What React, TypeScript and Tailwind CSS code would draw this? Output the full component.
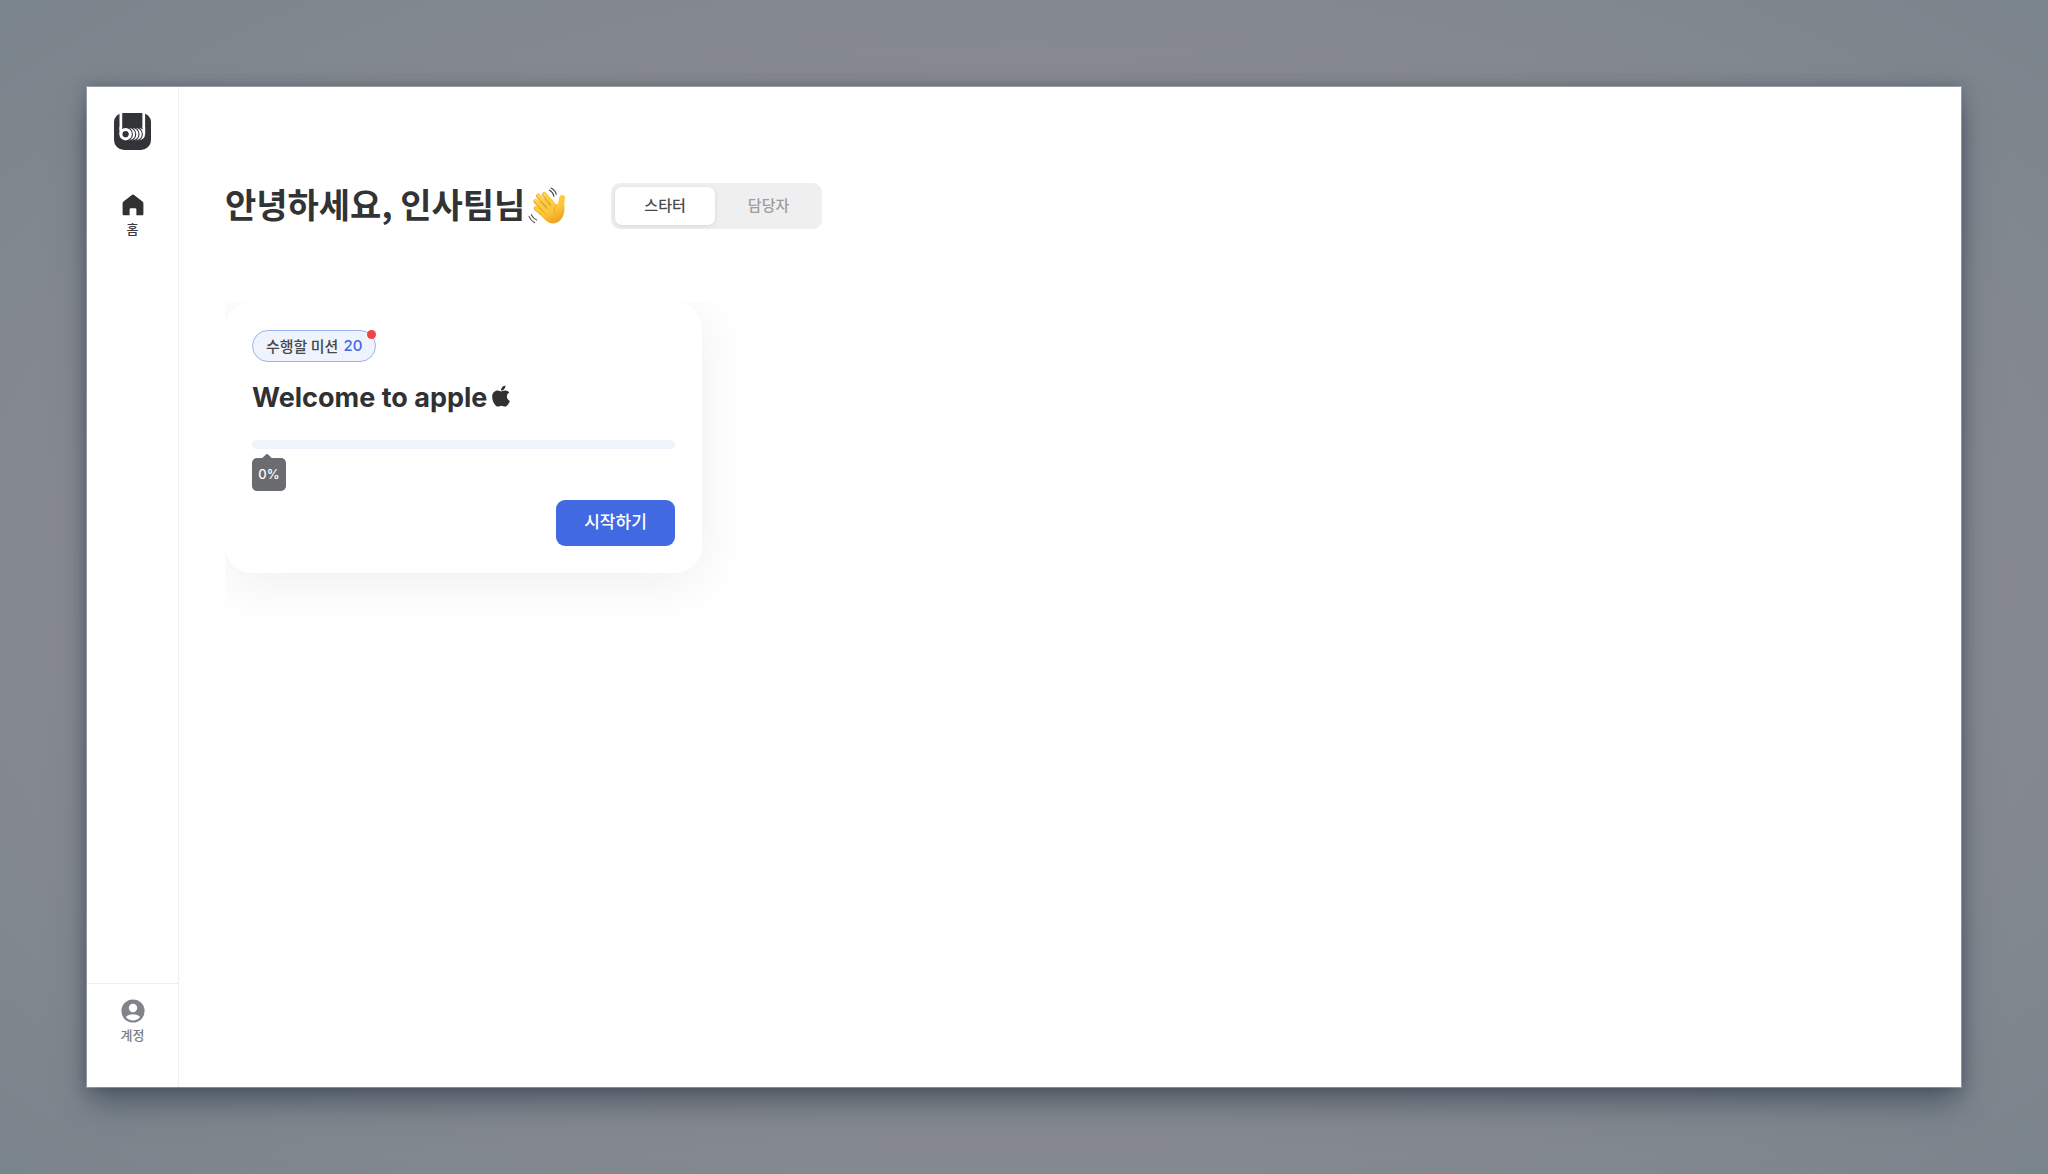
import React, { useState } from 'react';
import { FaApple } from 'react-icons/fa';

// -------------------------------------------------------------
// ICONS
// -------------------------------------------------------------
function LogoIcon() {
  return (
    <svg viewBox="0 0 37 37" className="w-[37px] h-[37px]" aria-hidden="true">
      <path d="M9 0H28A9 9 0 0 1 37 9V27A10 10 0 0 1 27 37H10A10 10 0 0 1 0 27V9A9 9 0 0 1 9 0Z" fill="#323437" />
      <path d="M5.5 0H8.2V21H5.5ZM28.4 0H31.1V21H28.4Z" fill="#fff" />
      {[24.8, 21.5, 18.2, 14.9].map((cx) => (
        <circle key={cx} cx={cx} cy="21.2" r="6.8" fill="#fff" stroke="#323437" strokeWidth="1.1" />
      ))}
      <path d="M28.4 14H31.1V21.4L29.4 20Z" fill="#fff" />
      <circle cx="11.6" cy="21.2" r="6.8" fill="#fff" stroke="#323437" strokeWidth="1.1" />
      <path d="M5.5 14H8.2V18L5.5 21.2Z" fill="#fff" />
      <circle cx="11.6" cy="21.2" r="3.1" fill="#323437" />
    </svg>
  );
}

function HomeIcon() {
  return (
    <svg viewBox="0 0 22 22" className="w-[22px] h-[22px]" fill="#2f3133" aria-hidden="true">
      <path d="M9.9 0.9Q11 0.1 12.1 0.9L20.5 7.6Q21.4 8.3 21.4 9.4V20.1Q21.4 21.3 20.2 21.3H14.4V15.6Q14.4 14.3 13.2 14.3H8.8Q7.6 14.3 7.6 15.6V21.3H1.8Q0.6 21.3 0.6 20.1V9.4Q0.6 8.3 1.5 7.6Z" />
    </svg>
  );
}

function AccountIcon() {
  return (
    <svg viewBox="0 0 24 24" className="w-6 h-6" aria-hidden="true">
      <circle cx="12" cy="12" r="11.6" fill="#808389" />
      <circle cx="12" cy="9" r="4.2" fill="#fff" />
      <path d="M4.9 18C6.5 16.1 9.2 15.3 12 15.3S17.5 16.1 19.1 18C17.5 20.2 14.9 21.4 12 21.4S6.5 20.2 4.9 18Z" fill="#fff" />
    </svg>
  );
}

function WavingHand() {
  return (
    <svg viewBox="22 15 114 114" className="w-[38px] h-[38px]" role="img" aria-label="손 인사">
      <defs>
        <linearGradient id="skin" gradientUnits="userSpaceOnUse" x1="60" y1="30" x2="110" y2="126">
          <stop offset="0" stopColor="#ffd24a" />
          <stop offset="0.6" stopColor="#fcc63a" />
          <stop offset="1" stopColor="#e89c1c" />
        </linearGradient>
      </defs>
      <g fill="none" strokeLinecap="round">
        <g stroke="#d98e18" strokeWidth="13.5">
          <path d="M46 79L76 104" />
          <path d="M45 58L80 92" />
          <path d="M53 42L88 80" />
          <path d="M71 37L98 70" />
        </g>
        <g stroke="url(#skin)" strokeWidth="12.5">
          <path d="M47 78L82 106" />
          <path d="M46 57L88 96" />
          <path d="M54 41L96 84" />
          <path d="M72 36L106 76" />
        </g>
      </g>
      <path d="M84 68L104 68C112 70 113 62 114 54C115 44 119 38 126 39C134 40 134 48 132 54C129 64 134 80 130 94C125 115 108 128 91 124C80 121 70 112 60 100Z" fill="url(#skin)" />
      <g fill="none" strokeLinecap="round">
        <path d="M108 68C100 75 99 86 104 94" stroke="#e3a022" strokeWidth="2.5" />
        <g stroke="#d98e18" strokeWidth="1.8">
          <path d="M72 50L90 72" />
          <path d="M60 60L82 83" />
          <path d="M56 79L76 97" />
        </g>
        <g stroke="#45484c" strokeWidth="3.2">
          <path d="M91 18C99 22 105 29 107 37" />
          <path d="M86 24C93 28 98 34 100 43" />
          <path d="M25 103C28 111 33 117 42 122" />
          <path d="M32 98C35 105 41 111 48 114" />
        </g>
      </g>
    </svg>
  );
}

// -------------------------------------------------------------
// SIDEBAR
// -------------------------------------------------------------
function Sidebar() {
  return (
    <aside className="w-[92px] shrink-0 border-r border-[#f0f0f1] flex flex-col items-center pt-[26px]">
      <a href="#" aria-label="홈으로">
        <LogoIcon />
      </a>
      <nav className="mt-11 flex flex-col items-center">
        <a href="#home" className="flex flex-col items-center gap-[3px] text-[13px] leading-5 font-medium text-[#3a3c3f]">
          <HomeIcon />
          <span>홈</span>
        </a>
      </nav>
      <div className="mt-auto w-full h-[104px] border-t border-[#ececee] flex flex-col items-center pt-[15px]">
        <button type="button" className="flex flex-col items-center gap-[2px] text-[13px] leading-5 font-medium text-[#7b7d82]">
          <AccountIcon />
          <span>계정</span>
        </button>
      </div>
    </aside>
  );
}

// -------------------------------------------------------------
// ROLE SWITCH
// -------------------------------------------------------------
const ROLES = ['스타터', '담당자'];

function RoleSwitch() {
  const [role, setRole] = useState(ROLES[0]);

  return (
    <div className="flex items-center gap-1 bg-[#efefef] rounded-[9px] p-1 w-[211px] h-[46px]">
      {ROLES.map((item) => (
        <button
          key={item}
          type="button"
          aria-pressed={role === item}
          onClick={() => setRole(item)}
          className={
            role === item
              ? 'flex-1 h-full pb-0.5 rounded-[7px] bg-white text-[15px] leading-5 font-medium text-[#47494d] shadow-[0_1px_5px_rgba(0,0,0,0.1)]'
              : 'flex-1 h-full pb-0.5 rounded-[7px] text-[15px] leading-5 font-medium text-[#9b9da1]'
          }
        >
          {item}
        </button>
      ))}
    </div>
  );
}

// -------------------------------------------------------------
// MISSION CARD
// -------------------------------------------------------------
function MissionCard({ title, missions, percent }: { title: string; missions: number; percent: number }) {
  return (
    <article className="w-[477px] bg-white rounded-[27px] px-[27px] pt-7 pb-[27px] shadow-[0_9px_56px_rgba(0,0,0,0.07)]">
      <div className="relative inline-flex items-center gap-[5px] h-8 px-[13px] rounded-full border border-[#9db3f2] bg-[#eff3fe] text-[15px] leading-5 font-medium text-[#47494d]">
        <span>수행할 미션</span>
        <span className="font-['Inter'] font-medium text-[#4169e1]">{missions}</span>
        <span className="absolute -top-px -right-px w-[9px] h-[9px] rounded-full bg-[#ef4444]"></span>
      </div>

      <h2 className="mt-[18px] flex items-center gap-1 font-['Inter'] text-[27px] leading-9 font-bold text-[#2f3133]">
        <span>{title}</span>
        <FaApple className="w-5 h-6 -mt-1" aria-hidden="true" />
      </h2>

      <div
        role="progressbar"
        aria-label="진행률"
        aria-valuenow={percent}
        className="mt-6 h-[9px] rounded-full bg-[#eff3fc] overflow-hidden"
      >
        <div className="h-full bg-[#4169e1]" style={{ width: `${percent}%` }}></div>
      </div>

      <div className="relative mt-[9px] w-[34px] h-[33px] pb-px rounded-[5px] bg-[#6a6c70] flex items-center justify-center font-['Inter'] text-[13px] leading-5 font-medium text-white">
        <span className="absolute -top-[3px] left-[11px] w-2 h-2 rotate-45 rounded-[2px] bg-[#6a6c70]"></span>
        <span className="relative">{percent}%</span>
      </div>

      <div className="mt-[9px] flex justify-end">
        <button type="button" className="w-[119px] h-[46px] pb-1 rounded-[9px] bg-[#4169e1] text-[17px] leading-6 font-medium text-white">
          시작하기
        </button>
      </div>
    </article>
  );
}

export default function App() {
  return (
    <div className="min-h-screen flex p-[86px] bg-[radial-gradient(ellipse_at_center,#8a8c91_0%,#868a90_65%,#7a848c_100%)] font-['Noto_Sans_CJK_KR',sans-serif]">
      <div className="flex-1 flex bg-white bg-clip-padding border border-white/30 shadow-[0_0_12px_rgba(45,55,72,0.35),0_18px_30px_-4px_rgba(45,58,75,0.6)]">
        <Sidebar />

        <main className="flex-1 min-w-0 pl-[46px] pt-24">
          <header className="flex items-center gap-[45px]">
            <h1 className="flex items-center gap-[3px] text-[34px] leading-[46px] font-bold text-[#323335]">
              <span className="pb-1 leading-[42px]">안녕하세요, 인사팀님</span>
              <WavingHand />
            </h1>
            <RoleSwitch />
          </header>

          <section className="mt-[73px] pb-20 overflow-hidden">
            <MissionCard title="Welcome to apple" missions={20} percent={0} />
          </section>
        </main>
      </div>
    </div>
  );
}
